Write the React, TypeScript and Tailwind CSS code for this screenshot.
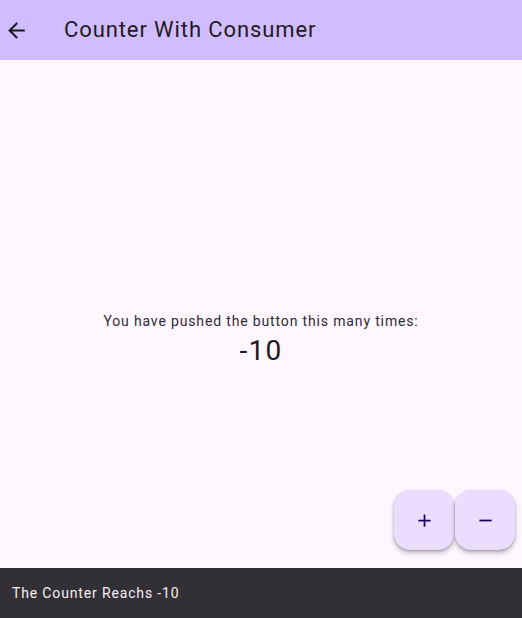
import React from 'react';

const Fab: React.FC<{ label: string; children: React.ReactNode }> = ({ label, children }) => (
  <button
    aria-label={label}
    className="flex h-[60px] w-[60px] items-center justify-center rounded-[16px] bg-[#eaddff] text-[#21005d] shadow-[0_3px_5px_rgba(0,0,0,0.25),0_1px_2px_rgba(0,0,0,0.2)]"
  >
    {children}
  </button>
);

export default function App() {
  return (
    <div
      className="relative flex h-[618px] w-[522px] flex-col overflow-hidden bg-[#fef7ff]"
      style={{ fontFamily: 'Roboto, "Liberation Sans", sans-serif' }}
    >
      <header className="flex h-[60px] shrink-0 items-center bg-[#d1bcff]">
        <div className="flex w-[64px] items-center pl-[4px]">
          <svg width="25" height="25" viewBox="0 0 24 24" fill="#1d1b20">
            <path d="M20 11H7.83l5.59-5.59L12 4l-8 8 8 8 1.41-1.41L7.83 13H20v-2z" />
          </svg>
        </div>
        <h1 className="text-[22px] leading-[28px] tracking-[0.9px] text-[#1d1b20]">Counter With Consumer</h1>
      </header>

      <main className="flex flex-1 flex-col items-center justify-center pt-[52px]">
        <p className="text-[14px] leading-[20px] tracking-[0.85px] text-[#2e2b33]">
          You have pushed the button this many times:
        </p>
        <p className="mt-[2px] text-[28px] leading-[36px] tracking-[1.3px] text-[#1d1b20]">-10</p>
      </main>

      <div className="absolute right-[7px] bottom-[68px] flex gap-[1px]">
        <Fab label="Increment">
          <svg width="21" height="21" viewBox="0 0 24 24" fill="currentColor">
            <path d="M19 13h-6v6h-2v-6H5v-2h6V5h2v6h6v2z" />
          </svg>
        </Fab>
        <Fab label="Decrement">
          <svg width="21" height="21" viewBox="0 0 24 24" fill="currentColor">
            <path d="M19 13H5v-2h14v2z" />
          </svg>
        </Fab>
      </div>

      <footer className="flex h-[50px] shrink-0 items-center bg-[#322f35] px-[12px]">
        <span className="text-[14px] leading-[20px] tracking-[0.85px] text-[#f5eff7]">The Counter Reachs -10</span>
      </footer>
    </div>
  );
}
